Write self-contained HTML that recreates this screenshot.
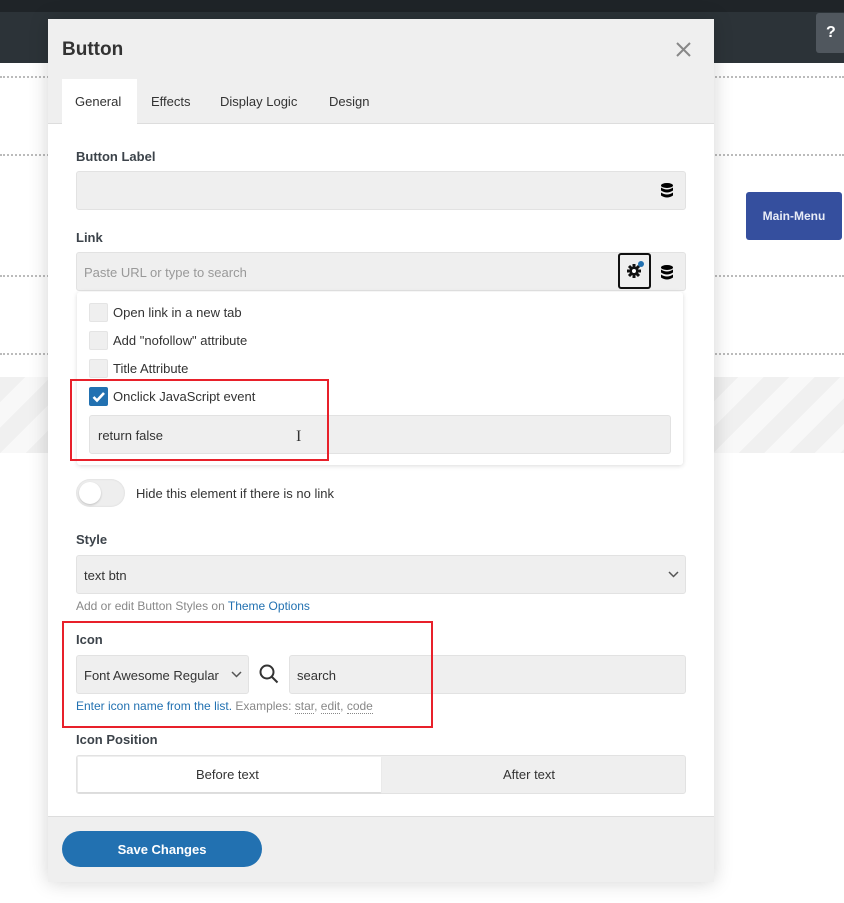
<!DOCTYPE html>
<html><head><meta charset="utf-8"><style>
*{box-sizing:border-box;margin:0;padding:0}
body{width:844px;height:903px;background:#fff;position:relative;overflow:hidden;font-family:"Liberation Sans",sans-serif;font-size:13px;color:#333}
.a{position:absolute}
.dot{position:absolute;left:0;width:844px;border-top:2px dotted #bbb}
.lbl{position:absolute;left:76px;font-size:13px;font-weight:bold;color:#3c434a}
.inp{position:absolute;background:#efefef;border:1px solid #e2e2e2;border-radius:3px}
.cb{position:absolute;left:89px;width:19px;height:19px;background:#efefef;border:1px solid #e4e4e4;border-radius:2px}
.ct{position:absolute;left:113px;font-size:13px;color:#333;line-height:16px}
.red{position:absolute;border:2px solid #e8202a}
</style></head><body>
<div class="a" style="left:0;top:0;width:844px;height:63px;background:#2c3338"></div>
<div class="a" style="left:0;top:0;width:844px;height:12px;background:#1f2428"></div>
<div class="a" style="left:816px;top:13px;width:30px;height:40px;background:#50575e;border-radius:3px;color:#fff;font-weight:bold;font-size:16px;line-height:40px;padding-left:10px">?</div>
<div class="dot" style="top:76px"></div>
<div class="dot" style="top:154px"></div>
<div class="dot" style="top:275px"></div>
<div class="dot" style="top:353px"></div>
<div class="a" style="left:0;top:377px;width:844px;height:76px;background:repeating-linear-gradient(135deg,#f0f0f0 0 18px,#f8f8f8 18px 36px)"></div>
<div class="a" style="left:746px;top:192px;width:96px;height:48px;background:#354f9e;border-radius:3px;color:#e8ecf6;font-size:12px;font-weight:bold;text-align:center;line-height:48px">Main-Menu</div>

<div class="a" style="left:48px;top:19px;width:666px;height:863px;background:#fff;box-shadow:0 0 18px rgba(0,0,0,.18)">
 <div class="a" style="left:0;top:0;width:666px;height:105px;background:#efefef;border-bottom:1px solid #ddd"></div>
 <div class="a" style="left:14px;top:20px;font-size:19px;font-weight:bold;color:#333">Button</div>
 <svg class="a" style="left:628px;top:23px" width="15" height="15"><path d="M1 1l13 13M14 1L1 14" stroke="#888" stroke-width="2"/></svg>
 <div class="a" style="left:14px;top:60px;width:75px;height:46px;background:#fff"></div>
 <div class="a" style="left:27px;top:75px;color:#333">General</div>
 <div class="a" style="left:103px;top:75px;color:#333">Effects</div>
 <div class="a" style="left:172px;top:75px;color:#333">Display Logic</div>
 <div class="a" style="left:281px;top:75px;color:#333">Design</div>
 <div class="a" style="left:0;top:797px;width:666px;height:66px;background:#efefef;border-top:1px solid #ddd"></div>
 <div class="a" style="left:14px;top:812px;width:200px;height:36px;background:#2271b1;border-radius:18px;color:#fff;font-weight:bold;text-align:center;line-height:37px">Save Changes</div>
</div>

<div class="lbl" style="top:149px">Button Label</div>
<div class="inp" style="left:76px;top:171px;width:610px;height:39px"></div>
<svg class="a" style="left:661px;top:183px" width="12" height="15" viewBox="0 0 12 15"><ellipse cx="6" cy="2.5" rx="6" ry="2.5"/><path d="M0 4.5q6 4 12 0v3q-6 4 -12 0zM0 9.5q6 4 12 0v3q-6 4 -12 0z"/></svg>

<div class="lbl" style="top:230px">Link</div>
<div class="inp" style="left:76px;top:252px;width:610px;height:39px"></div>
<div class="a" style="left:84px;top:265px;color:#999">Paste URL or type to search</div>
<div class="a" style="left:618px;top:253px;width:33px;height:36px;border:2px solid #111;border-radius:3px"></div>
<svg class="a" style="left:627px;top:264px" width="14" height="14" viewBox="0 0 14 14"><g stroke="#111" stroke-width="3"><path d="M7 0v14M0 7h14M2 2l10 10M12 2L2 12"/></g><circle cx="7" cy="7" r="4.5" fill="#111"/><circle cx="7" cy="7" r="2" fill="#fff"/></svg>
<div class="a" style="left:638px;top:261px;width:6px;height:6px;border-radius:50%;background:#2271b1"></div>
<svg class="a" style="left:661px;top:265px" width="12" height="15" viewBox="0 0 12 15"><ellipse cx="6" cy="2.5" rx="6" ry="2.5"/><path d="M0 4.5q6 4 12 0v3q-6 4 -12 0zM0 9.5q6 4 12 0v3q-6 4 -12 0z"/></svg>

<div class="a" style="left:77px;top:292px;width:606px;height:173px;background:#fff;box-shadow:0 1px 5px rgba(0,0,0,.15);border-radius:3px"></div>
<div class="cb" style="top:303px"></div><div class="ct" style="top:305px">Open link in a new tab</div>
<div class="cb" style="top:331px"></div><div class="ct" style="top:333px">Add "nofollow" attribute</div>
<div class="cb" style="top:359px"></div><div class="ct" style="top:361px">Title Attribute</div>
<div class="cb" style="top:387px;background:#2271b1;border-color:#2271b1"><svg width="17" height="17" viewBox="0 0 17 17"><path d="M3.5 9l3.5 3.5 7-7.5" stroke="#fff" stroke-width="2.6" fill="none"/></svg></div>
<div class="ct" style="top:389px">Onclick JavaScript event</div>
<div class="inp" style="left:89px;top:415px;width:582px;height:39px"></div>
<div class="a" style="left:98px;top:428px;color:#333">return false</div>
<div class="a" style="left:296px;top:428px;font-size:16px;color:#333;font-family:'Liberation Serif',serif">I</div>
<div class="red" style="left:70px;top:379px;width:259px;height:82px"></div>

<div class="a" style="left:76px;top:479px;width:49px;height:28px;background:#eee;border-radius:14px;box-shadow:inset 0 0 2px rgba(0,0,0,.1)"></div>
<div class="a" style="left:79px;top:482px;width:22px;height:22px;background:#fff;border-radius:50%;box-shadow:0 1px 2px rgba(0,0,0,.2)"></div>
<div class="a" style="left:136px;top:486px">Hide this element if there is no link</div>

<div class="lbl" style="top:532px">Style</div>
<div class="inp" style="left:76px;top:555px;width:610px;height:39px"></div>
<div class="a" style="left:84px;top:568px">text btn</div>
<svg class="a" style="left:668px;top:571px" width="11" height="8"><path d="M1 1l4.5 4.5L10 1" stroke="#555" stroke-width="1.5" fill="none"/></svg>
<div class="a" style="left:76px;top:599px;font-size:12px;color:#888">Add or edit Button Styles on <span style="color:#2271b1">Theme Options</span></div>

<div class="lbl" style="top:632px">Icon</div>
<div class="inp" style="left:76px;top:655px;width:173px;height:39px"></div>
<div class="a" style="left:84px;top:668px">Font Awesome Regular</div>
<svg class="a" style="left:231px;top:671px" width="11" height="8"><path d="M1 1l4.5 4.5L10 1" stroke="#555" stroke-width="1.5" fill="none"/></svg>
<svg class="a" style="left:259px;top:664px" width="20" height="20"><circle cx="8" cy="8" r="6.5" stroke="#333" stroke-width="2" fill="none"/><path d="M13 13l5.5 5.5" stroke="#333" stroke-width="2"/></svg>
<div class="inp" style="left:289px;top:655px;width:397px;height:39px"></div>
<div class="a" style="left:297px;top:668px">search</div>
<div class="a" style="left:76px;top:699px;font-size:12px;color:#888"><span style="color:#2271b1">Enter icon name from the list.</span> Examples: <span style="border-bottom:1px dotted #888">star</span>, <span style="border-bottom:1px dotted #888">edit</span>, <span style="border-bottom:1px dotted #888">code</span></div>
<div class="red" style="left:62px;top:621px;width:371px;height:107px"></div>

<div class="lbl" style="top:732px">Icon Position</div>
<div class="inp" style="left:76px;top:755px;width:610px;height:39px"></div>
<div class="a" style="left:78px;top:757px;width:303px;height:35px;background:#fff;box-shadow:0 1px 1px rgba(0,0,0,.1)"></div>
<div class="a" style="left:196px;top:767px">Before text</div>
<div class="a" style="left:503px;top:767px">After text</div>
</body></html>
